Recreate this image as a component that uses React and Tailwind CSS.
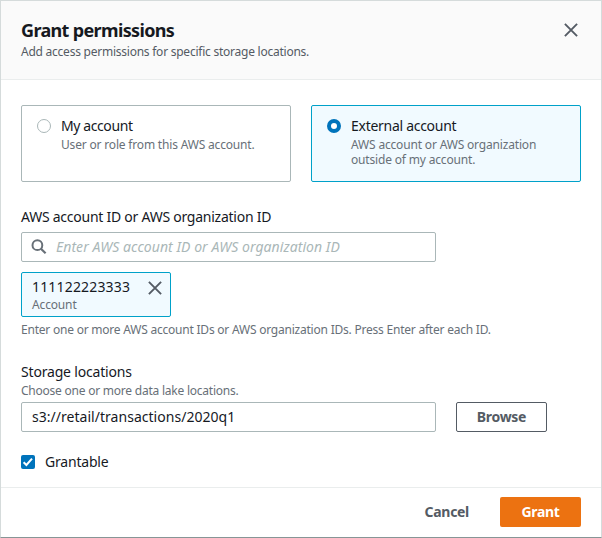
const CloseIcon = () => (
  <svg width="14" height="14" viewBox="0 0 14 14" fill="none" stroke="#545b64" strokeWidth="1.9">
    <path d="M0.9 0.9 L13.1 13.1 M13.1 0.9 L0.9 13.1" />
  </svg>
);

const SearchIcon = () => (
  <svg width="16" height="16" viewBox="0 0 16 16" fill="none" stroke="#687078" strokeWidth="2">
    <circle cx="6.4" cy="6.2" r="4.9" />
    <path d="M9.9 9.7 L14.6 14.2" strokeWidth="2.2" />
  </svg>
);

export default function App() {
  return (
    <div className="flex h-[538px] w-[602px] flex-col border border-[#d5dbdb] border-b-[#879596] bg-white font-['Noto_Sans',sans-serif] text-[14px] leading-[22px] whitespace-nowrap text-[#16191f]">
      <header className="flex h-[79px] items-start justify-between border-b border-[#eaeded] bg-[#fafafa] pt-[18px] pr-[23px] pl-5">
        <div>
          <h1 className="text-[18px] leading-[22px] font-bold tracking-[-0.65px]">Grant permissions</h1>
          <p className="mt-[2px] text-[12px] leading-[18px] tracking-[-0.24px] text-[#545b64]">Add access permissions for specific storage locations.</p>
        </div>
        <button className="mt-[4px]"><CloseIcon /></button>
      </header>

      <main className="flex-1 px-5 pt-[25px]">
        <div className="grid w-[560px] grid-cols-2 gap-5">
          <div className="flex h-[77px] rounded-[2px] border border-[#aab7b8] pt-[9px] pl-[15px]">
            <span className="mt-[4px] h-[14px] w-[14px] rounded-full border border-[#aab7b8] bg-white" />
            <div className="ml-[10px]">
              <p className="leading-[22px] tracking-[-0.4px]">My account</p>
              <p className="text-[12px] leading-[15px] tracking-[-0.18px] text-[#687078]">User or role from this AWS account.</p>
            </div>
          </div>
          <div className="flex h-[77px] rounded-[2px] border border-[#00a1c9] bg-[#f1faff] pt-[9px] pl-[15px]">
            <span className="mt-[4px] h-[14px] w-[14px] rounded-full border-4 border-[#0073bb] bg-white" />
            <div className="ml-[10px]">
              <p className="leading-[22px] tracking-[-0.28px]">External account</p>
              <p className="text-[12px] leading-[15px] tracking-[-0.17px] text-[#687078]">AWS account or AWS organization<br />outside of my account.</p>
            </div>
          </div>
        </div>

        <p className="mt-[24px] tracking-[-0.25px]">AWS account ID or AWS organization ID</p>
        <div className="mt-[4px] flex h-[30px] w-[415px] items-center rounded-[2px] border border-[#aab7b8] pl-[9px]">
          <SearchIcon />
          <span className="ml-[9px] tracking-[0.05px] text-[#aab7b8] italic">Enter AWS account ID or AWS organization ID</span>
        </div>

        <div className="mt-[10px] flex h-[45px] w-[150px] items-start justify-between rounded-[2px] border border-[#00a1c9] bg-[#f1faff] pt-[4px] pr-[8px] pl-[10px]">
          <div>
            <p className="leading-[20px] tracking-[0.17px]">111122223333</p>
            <p className="text-[12px] leading-[16px] tracking-[-0.15px] text-[#687078]">Account</p>
          </div>
          <button className="mt-[4px]"><CloseIcon /></button>
        </div>
        <p className="mt-[4px] text-[12px] leading-[18px] tracking-[-0.22px] text-[#687078]">Enter one or more AWS account IDs or AWS organization IDs. Press Enter after each ID.</p>

        <p className="mt-[22px] tracking-[-0.18px]">Storage locations</p>
        <p className="text-[12px] leading-[15px] tracking-[-0.23px] text-[#687078]">Choose one or more data lake locations.</p>
        <div className="mt-[4px] flex gap-5">
          <div className="flex h-[30px] w-[415px] items-center rounded-[2px] border border-[#aab7b8] pl-[10px]">
            <span className="tracking-[0.03px]">s3://retail/transactions/2020q1</span>
          </div>
          <button className="h-[30px] w-[91px] rounded-[2px] border border-[#545b64] leading-[28px] font-bold tracking-[-0.3px] text-[#545b64]">Browse</button>
        </div>

        <div className="mt-[19px] flex items-center">
          <span className="flex h-[14px] w-[14px] items-center justify-center rounded-[2px] bg-[#0073bb]">
            <svg width="14" height="14" viewBox="0 0 14 14" fill="none" stroke="white" strokeWidth="2">
              <path d="M2.6 7.3 L5.4 10 L11 3.6" />
            </svg>
          </span>
          <span className="ml-[10px] tracking-[-0.2px]">Grantable</span>
        </div>
      </main>

      <footer className="flex h-[50px] items-start justify-end border-t border-[#eaeded] pt-[9px] pr-5 font-bold tracking-[-0.3px]">
        <button className="h-[30px] px-[31px] text-[#545b64]">Cancel</button>
        <button className="h-[30px] w-[81px] rounded-[2px] bg-[#ec7211] text-white">Grant</button>
      </footer>
    </div>
  );
}
